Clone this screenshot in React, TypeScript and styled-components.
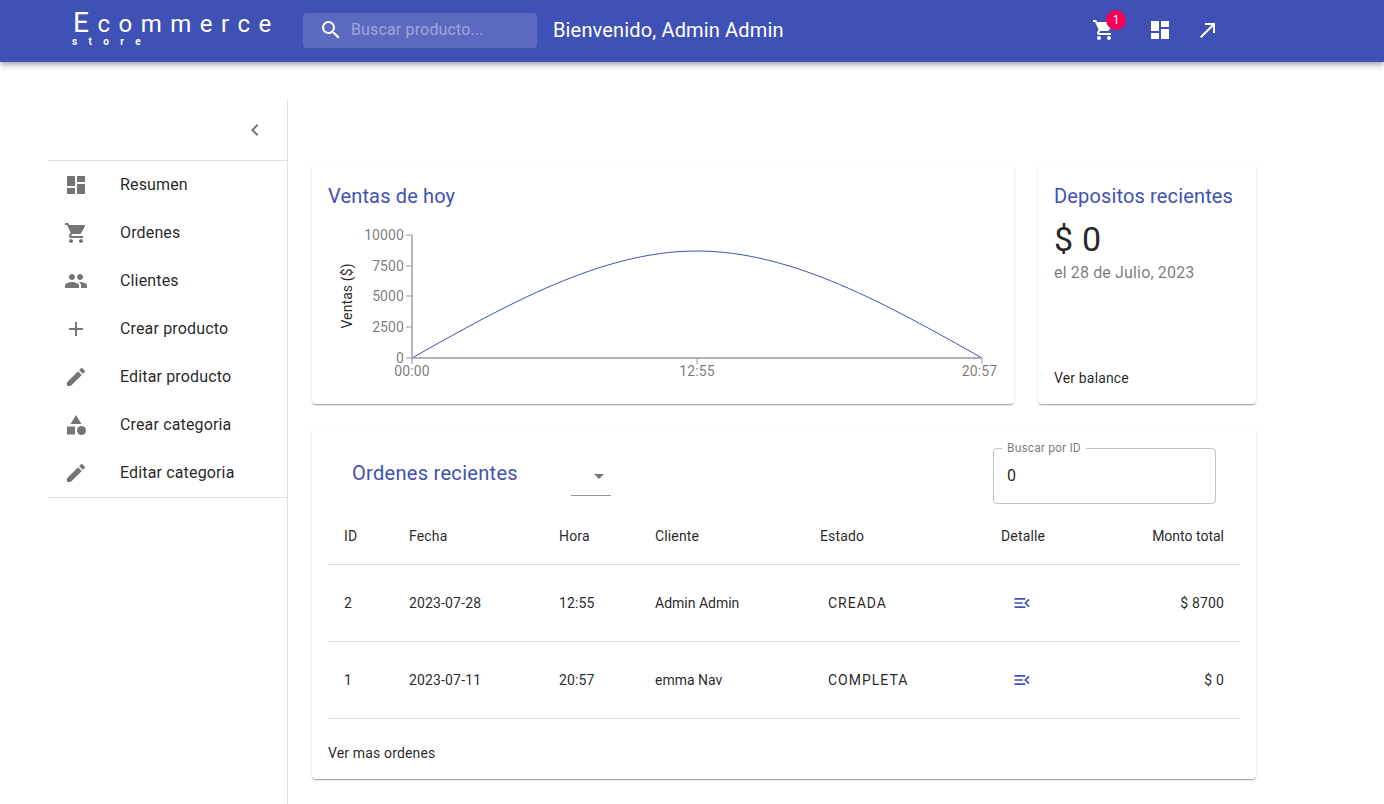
import React from "react";
import styled, { createGlobalStyle } from "styled-components";
import {
  MdAdd,
  MdArrowDropDown,
  MdCallMade,
  MdCategory,
  MdChevronLeft,
  MdDashboard,
  MdEdit,
  MdMenuOpen,
  MdPeople,
  MdSearch,
  MdShoppingCart,
} from "react-icons/md";

const primary = "#3f51b5";
const textMain = "rgba(0, 0, 0, 0.87)";
const textSoft = "rgba(0, 0, 0, 0.54)";
const divider = "rgba(0, 0, 0, 0.12)";

const GlobalStyle = createGlobalStyle`
  html, body {
    margin: 0;
    height: 100%;
    overflow: hidden;
    background: #fff;
    font-family: Roboto, "Liberation Sans", sans-serif;
    color: ${textMain};
  }
`;

const Header = styled.header`
  position: relative;
  z-index: 2;
  display: flex;
  align-items: center;
  box-sizing: border-box;
  height: 62px;
  padding: 0 0 2px 73px;
  background: ${primary};
  color: #fff;
  box-shadow: 0 2px 4px -1px rgba(0, 0, 0, 0.2), 0 4px 5px 0 rgba(0, 0, 0, 0.14),
    0 1px 10px 0 rgba(0, 0, 0, 0.12);
`;

const Logo = styled.div`
  display: flex;
  flex-direction: column;
  width: 230px;
  margin-bottom: 5px;
`;

const LogoTitle = styled.span`
  font-size: 24px;
  line-height: 28px;
  letter-spacing: 8.5px;
  white-space: nowrap;
`;

const LogoInitial = styled.span`
  font-size: 28px;
`;

const LogoSub = styled.span`
  margin: -1px 0 0 -1px;
  font-size: 10px;
  line-height: 10px;
  font-weight: 700;
  letter-spacing: 11.4px;
`;

const SearchBox = styled.div`
  display: flex;
  align-items: center;
  box-sizing: border-box;
  width: 234px;
  height: 35px;
  padding-left: 16px;
  border-radius: 4px;
  background: rgba(255, 255, 255, 0.15);
  svg {
    flex: none;
    margin-right: 8px;
  }
`;

const SearchInput = styled.input`
  width: 170px;
  margin-bottom: 2px;
  padding: 0;
  border: 0;
  outline: 0;
  background: transparent;
  color: #fff;
  font: 400 16px Roboto, sans-serif;
  letter-spacing: 0.15px;
  &::placeholder {
    color: rgba(255, 255, 255, 0.42);
    opacity: 1;
  }
`;

const Welcome = styled.div`
  margin-left: 16px;
  width: 527px;
  font-size: 20px;
  letter-spacing: 0.15px;
`;

const IconButton = styled.div<{ $gap?: number }>`
  position: relative;
  display: flex;
  align-items: center;
  justify-content: center;
  width: 48px;
  height: 48px;
  margin-left: ${(p) => p.$gap ?? 0}px;
`;

const Badge = styled.span`
  position: absolute;
  top: 4px;
  right: 2px;
  width: 20px;
  height: 20px;
  border-radius: 50%;
  background: #f50057;
  color: #fff;
  font-size: 12px;
  line-height: 20px;
  text-align: center;
`;

const Body = styled.div`
  display: flex;
  height: calc(100vh - 62px);
  padding-left: 48px;
`;

const Sidebar = styled.nav`
  flex: none;
  box-sizing: border-box;
  width: 240px;
  margin-top: 38px;
  border-right: 1px solid ${divider};
`;

const SidebarTop = styled.div`
  display: flex;
  align-items: center;
  justify-content: flex-end;
  box-sizing: border-box;
  height: 61px;
  padding-right: 20px;
  border-bottom: 1px solid ${divider};
  color: ${textSoft};
`;

const NavList = styled.div`
  border-bottom: 1px solid ${divider};
`;

const NavItem = styled.div`
  display: flex;
  align-items: center;
  height: 48px;
  padding-left: 16px;
  font-size: 16px;
  letter-spacing: 0.15px;
  svg {
    flex: none;
    margin-right: 32px;
    color: ${textSoft};
  }
`;

const NavLabel = styled.span`
  margin-bottom: 2px;
`;

const Content = styled.main`
  display: grid;
  grid-template-columns: 702px 218px;
  grid-template-rows: 239px 351px;
  gap: 24px;
  align-content: start;
  padding: 103px 0 0 24px;
`;

const Card = styled.section`
  display: flex;
  flex-direction: column;
  box-sizing: border-box;
  padding: 16px;
  border-radius: 4px;
  background: #fff;
  box-shadow: 0 2px 1px -1px rgba(0, 0, 0, 0.2), 0 1px 1px 0 rgba(0, 0, 0, 0.14),
    0 1px 3px 0 rgba(0, 0, 0, 0.12);
`;

const WideCard = styled(Card)`
  grid-column: 1 / 3;
  padding-top: 20px;
`;

const CardTitle = styled.h2`
  margin: 0;
  color: ${primary};
  font-size: 20px;
  font-weight: 400;
  line-height: 30px;
  letter-spacing: 0.15px;
`;

const Chart = styled.svg`
  display: block;
  flex: none;
  margin-top: 14px;
  text {
    font-family: Roboto, sans-serif;
    font-size: 14px;
    letter-spacing: 0.1px;
  }
`;

const Amount = styled.div`
  margin-top: 7px;
  font-size: 34px;
  line-height: 42px;
  letter-spacing: 0.25px;
`;

const AmountDate = styled.div`
  margin-top: 1px;
  color: ${textSoft};
  font-size: 16px;
  line-height: 24px;
  letter-spacing: 0.15px;
`;

const CardLink = styled.div`
  margin-top: auto;
  font-size: 14px;
  line-height: 20px;
  letter-spacing: 0.15px;
`;

const TableTop = styled.div`
  display: flex;
  align-items: center;
  height: 56px;
  padding-left: 24px;
`;

const RecentTitle = styled(CardTitle)`
  width: 219px;
  margin-bottom: 6px;
  letter-spacing: 0.3px;
`;

const SelectBox = styled.div`
  display: flex;
  justify-content: flex-end;
  box-sizing: border-box;
  width: 40px;
  height: 32px;
  margin-top: 8px;
  border-bottom: 1px solid rgba(0, 0, 0, 0.42);
  color: ${textSoft};
`;

const SearchField = styled.div`
  position: relative;
  display: flex;
  align-items: center;
  box-sizing: border-box;
  width: 223px;
  height: 56px;
  margin-left: 382px;
  padding: 0 0 2px 13px;
  border: 1px solid rgba(0, 0, 0, 0.23);
  border-radius: 4px;
  font-size: 16px;
`;

const FieldLabel = styled.label`
  position: absolute;
  top: -8px;
  left: 8px;
  padding: 0 5px;
  background: #fff;
  color: ${textSoft};
  font-size: 12px;
  line-height: 14px;
  letter-spacing: 0.15px;
`;

const Table = styled.table`
  width: 912px;
  margin-top: 4px;
  border-collapse: collapse;
  table-layout: fixed;
  font-size: 14px;
  letter-spacing: 0.15px;
`;

const HeadCell = styled.th<{ $width: number; $right?: boolean }>`
  width: ${(p) => p.$width}px;
  height: 56px;
  padding: 0 16px;
  border-bottom: 1px solid ${divider};
  box-sizing: border-box;
  font-weight: 400;
  letter-spacing: ${(p) => (p.$right ? 0 : 0.15)}px;
  text-align: ${(p) => (p.$right ? "right" : "left")};
`;

const Cell = styled.td<{ $right?: boolean }>`
  height: 76px;
  padding: 0 16px;
  border-bottom: 1px solid ${divider};
  text-align: ${(p) => (p.$right ? "right" : "left")};
`;

const ClientName = styled.span`
  letter-spacing: 0;
`;

const Status = styled.span`
  padding-left: 8px;
  letter-spacing: 1px;
`;

const DetailIcon = styled.span`
  display: block;
  width: 42px;
  text-align: center;
  line-height: 0;
  color: ${primary};
`;

const MoreLink = styled(CardLink)`
  margin-top: 24px;
`;

const nav = [
  { label: "Resumen", icon: <MdDashboard size={24} /> },
  { label: "Ordenes", icon: <MdShoppingCart size={24} /> },
  { label: "Clientes", icon: <MdPeople size={24} /> },
  { label: "Crear producto", icon: <MdAdd size={24} /> },
  { label: "Editar producto", icon: <MdEdit size={24} /> },
  { label: "Crear categoria", icon: <MdCategory size={24} /> },
  { label: "Editar categoria", icon: <MdEdit size={24} /> },
];

const orders = [
  { id: 2, date: "2023-07-28", time: "12:55", client: "Admin Admin", status: "CREADA", total: "$ 8700" },
  { id: 1, date: "2023-07-11", time: "20:57", client: "emma Nav", status: "COMPLETA", total: "$ 0" },
];

const yTicks = [
  { label: "10000", y: 235 },
  { label: "7500", y: 266 },
  { label: "5000", y: 296 },
  { label: "2500", y: 327 },
  { label: "0", y: 358 },
];

// the last label is pulled in so it stays inside the chart
const xTicks = [
  { label: "00:00", x: 412, textX: 412 },
  { label: "12:55", x: 697, textX: 697 },
  { label: "20:57", x: 982, textX: 979.5 },
];

const SalesChart = () => (
  <Chart width={670} height={161} viewBox="328 225 670 161">
    <path
      d="M412 358C507 304.5 602 251 697 251C792 251 887 304.5 982 358"
      fill="none"
      stroke={primary}
      strokeWidth={1}
    />
    <path d="M412 235V358H982" fill="none" stroke="#999" strokeWidth={1.4} />
    {yTicks.map((t) => (
      <g key={t.label}>
        <line x1={406} x2={412} y1={t.y} y2={t.y} stroke="#999" />
        <text x={404} y={t.y + 5} textAnchor="end" fill="rgba(0,0,0,0.54)">
          {t.label}
        </text>
      </g>
    ))}
    {xTicks.map((t) => (
      <g key={t.label}>
        <line x1={t.x} x2={t.x} y1={358} y2={364} stroke="#999" />
        <text x={t.textX} y={376} textAnchor="middle" fill="rgba(0,0,0,0.54)">
          {t.label}
        </text>
      </g>
    ))}
    <text transform="translate(352 296) rotate(-90)" textAnchor="middle" fill={textMain}>
      Ventas ($)
    </text>
  </Chart>
);

export default function App() {
  return (
    <>
      <GlobalStyle />
      <Header>
        <Logo>
          <LogoTitle>
            <LogoInitial>E</LogoInitial>commerce
          </LogoTitle>
          <LogoSub>store</LogoSub>
        </Logo>
        <SearchBox>
          <MdSearch size={24} />
          <SearchInput placeholder="Buscar producto..." readOnly />
        </SearchBox>
        <Welcome>Bienvenido, Admin Admin</Welcome>
        <IconButton>
          <MdShoppingCart size={24} />
          <Badge>1</Badge>
        </IconButton>
        <IconButton $gap={8}>
          <MdDashboard size={24} />
        </IconButton>
        <IconButton>
          <MdCallMade size={24} />
        </IconButton>
      </Header>
      <Body>
        <Sidebar>
          <SidebarTop>
            <MdChevronLeft size={24} />
          </SidebarTop>
          <NavList>
            {nav.map((item) => (
              <NavItem key={item.label}>
                {item.icon}
                <NavLabel>{item.label}</NavLabel>
              </NavItem>
            ))}
          </NavList>
        </Sidebar>
        <Content>
          <Card>
            <CardTitle>Ventas de hoy</CardTitle>
            <SalesChart />
          </Card>
          <Card>
            <CardTitle>Depositos recientes</CardTitle>
            <Amount>$ 0</Amount>
            <AmountDate>el 28 de Julio, 2023</AmountDate>
            <CardLink>Ver balance</CardLink>
          </Card>
          <WideCard>
            <TableTop>
              <RecentTitle>Ordenes recientes</RecentTitle>
              <SelectBox>
                <MdArrowDropDown size={24} />
              </SelectBox>
              <SearchField>
                <FieldLabel>Buscar por ID</FieldLabel>0
              </SearchField>
            </TableTop>
            <Table>
              <thead>
                <tr>
                  <HeadCell $width={65}>ID</HeadCell>
                  <HeadCell $width={150}>Fecha</HeadCell>
                  <HeadCell $width={96}>Hora</HeadCell>
                  <HeadCell $width={165}>Cliente</HeadCell>
                  <HeadCell $width={181}>Estado</HeadCell>
                  <HeadCell $width={115}>Detalle</HeadCell>
                  <HeadCell $width={140} $right>
                    Monto total
                  </HeadCell>
                </tr>
              </thead>
              <tbody>
                {orders.map((o) => (
                  <tr key={o.id}>
                    <Cell>{o.id}</Cell>
                    <Cell>{o.date}</Cell>
                    <Cell>{o.time}</Cell>
                    <Cell>
                      <ClientName>{o.client}</ClientName>
                    </Cell>
                    <Cell>
                      <Status>{o.status}</Status>
                    </Cell>
                    <Cell>
                      <DetailIcon>
                        <MdMenuOpen size={20} />
                      </DetailIcon>
                    </Cell>
                    <Cell $right>{o.total}</Cell>
                  </tr>
                ))}
              </tbody>
            </Table>
            <MoreLink>Ver mas ordenes</MoreLink>
          </WideCard>
        </Content>
      </Body>
    </>
  );
}
